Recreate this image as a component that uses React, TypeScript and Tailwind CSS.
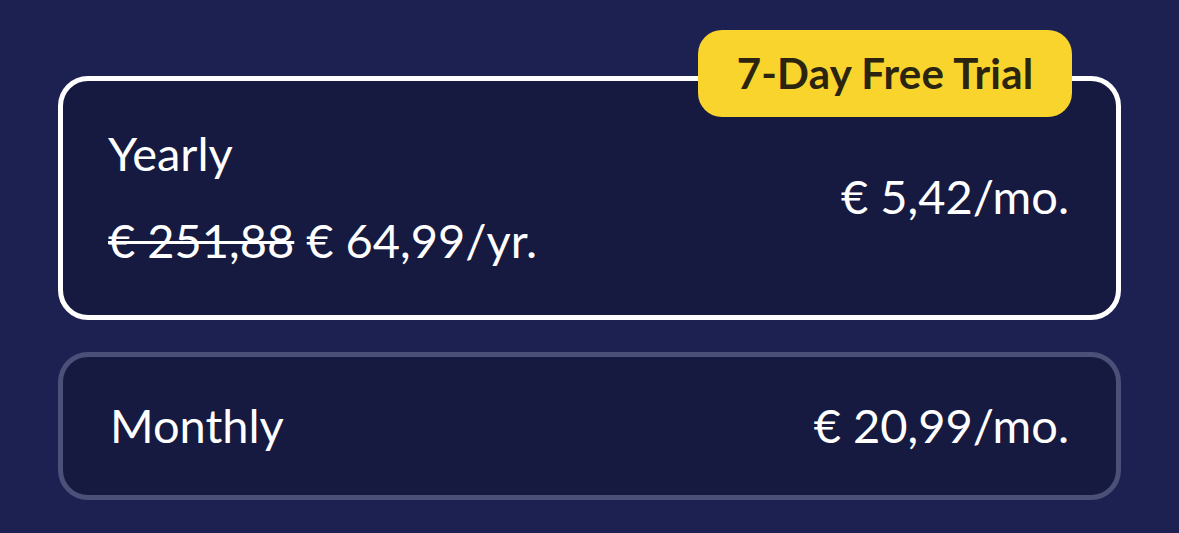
import React from "react";

const font = { fontFamily: "Lato, 'Noto Sans', sans-serif" };

// Plan option card
const PlanCard = ({
  selected,
  badge,
  children,
}: {
  selected?: boolean;
  badge?: string;
  children: React.ReactNode;
}) => (
  <div
    className={
      "relative w-full rounded-[30px] bg-[#161a40] " +
      (selected ? "border-[5px] border-white" : "border-[5px] border-[#4b5078]")
    }
  >
    {badge && (
      <div className="absolute right-[44px] top-[-51px] flex h-[87px] w-[374px] items-center justify-center rounded-[24px] bg-[#f8d42c]">
        <span className="text-[42px] font-bold text-[#2a2410] tracking-[0.2px]">{badge}</span>
      </div>
    )}
    {children}
  </div>
);

export default function App() {
  return (
    <div
      style={font}
      className="h-[533px] w-[1179px] overflow-hidden bg-[#1c2152] px-[58px] pt-[76px] text-white"
    >
      <div className="flex flex-col gap-[32px]">
        {/* Yearly */}
        <PlanCard selected badge="7-Day Free Trial">
          <div className="flex h-[234px] items-center justify-between pl-[45px] pr-[47px]">
            <div className="flex flex-col gap-[31px] -mt-[4px]">
              <div className="text-[47px] leading-[56px]">Yearly</div>
              <div className="text-[47px] leading-[56px]">
                <span className="line-through decoration-[3px]">€ 251,88</span> € 64,99/yr.
              </div>
            </div>
            <div className="text-[47px] leading-[56px] -mt-[4px]">€ 5,42/mo.</div>
          </div>
        </PlanCard>
        {/* Monthly */}
        <PlanCard>
          <div className="flex h-[138px] items-center justify-between pl-[47px] pr-[47px]">
            <div className="text-[47px] leading-[56px] -mt-[2px]">Monthly</div>
            <div className="text-[47px] leading-[56px] -mt-[2px]">€ 20,99/mo.</div>
          </div>
        </PlanCard>
      </div>
    </div>
  );
}
